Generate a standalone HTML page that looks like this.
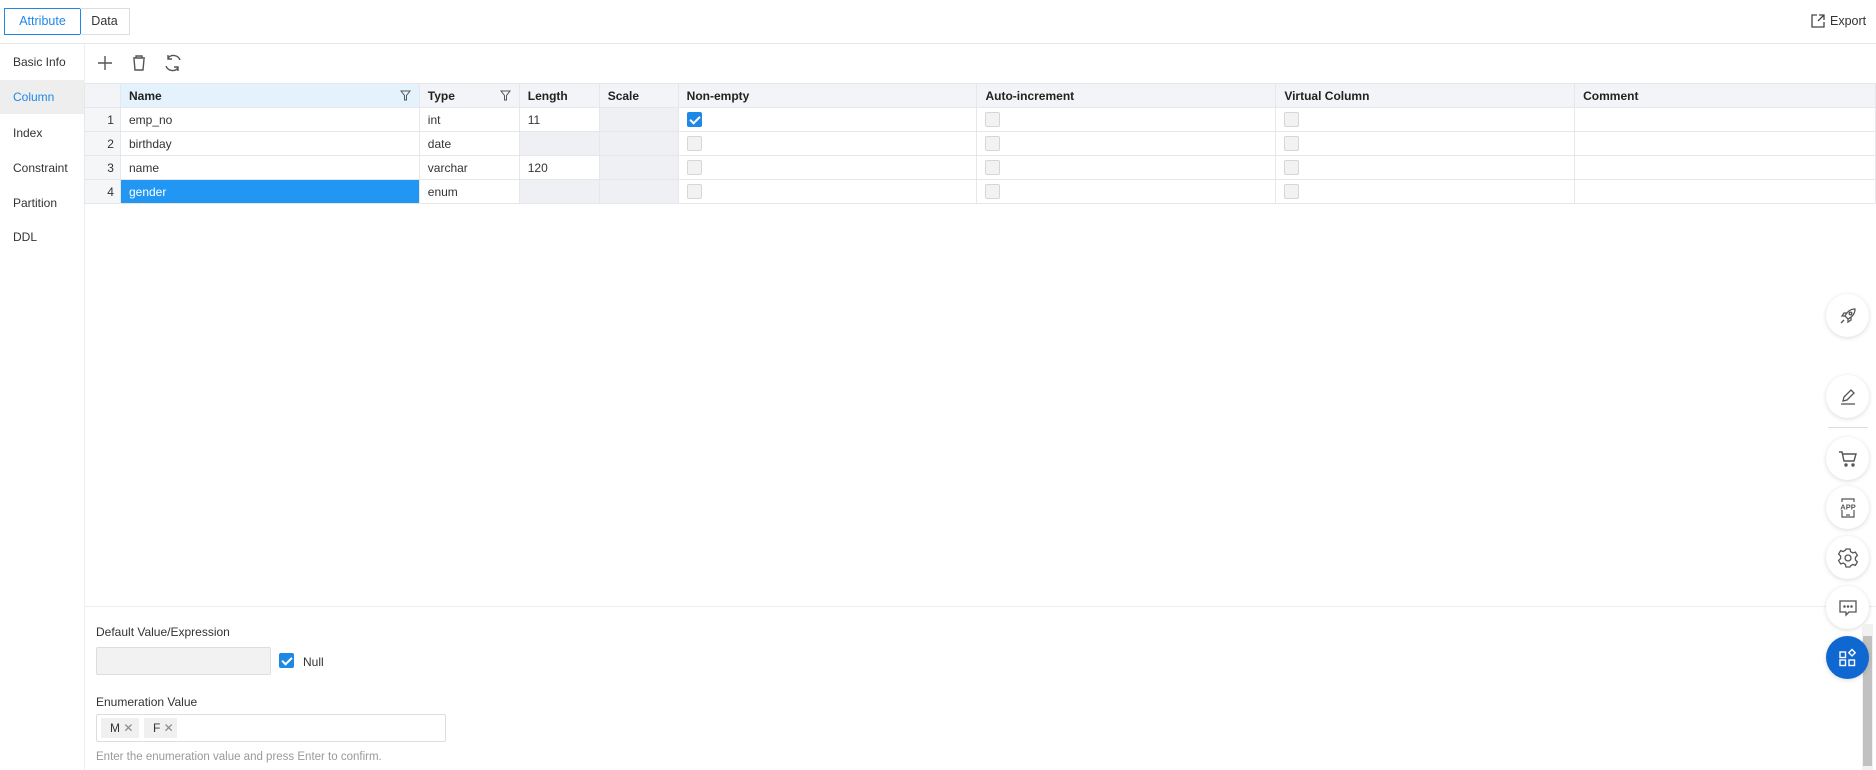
<!DOCTYPE html>
<html><head><meta charset="utf-8"><style>
*{box-sizing:border-box;margin:0;padding:0}
body{width:1876px;height:770px;overflow:hidden;background:#fff;font-family:"Liberation Sans",sans-serif;font-size:12px;color:#333;position:relative}
.abs{position:absolute}
.tab{position:absolute;top:8px;height:27px;line-height:25px;border:1px solid #ddd;text-align:center;font-size:12.5px}
.side div{position:absolute;left:0;width:84px;padding-left:13px;font-size:12px;color:#333}
table{position:absolute;left:84px;top:83px;border-collapse:collapse;table-layout:fixed}
td,th{border:1px solid #e6e7ea;height:24px;padding:0 8px;text-align:left;font-size:12px;white-space:nowrap}
th{background:#f3f4f7;font-weight:bold;color:#222;position:relative}
td.n{background:#f5f6f8;text-align:right;padding-right:6px;color:#333}
td.d{background:#eff0f3}
.cb{display:inline-block;width:15px;height:15px;border:1px solid #d6d6d6;border-radius:2px;background:#f2f2f2;vertical-align:middle}
.cbon{display:inline-block;width:15px;height:15px;border-radius:2px;background:#1e88e5;vertical-align:middle;position:relative}
.cbon:after{content:"";position:absolute;left:5px;top:2px;width:4px;height:8px;border:solid #fff;border-width:0 2px 2px 0;transform:rotate(45deg)}
.fil{position:absolute;right:8px;top:6px}
.fab{position:absolute;left:1826px;width:43px;height:43px;border-radius:50%;background:#fff;box-shadow:0 1px 5px rgba(0,0,0,.15);display:flex;align-items:center;justify-content:center}
</style></head><body>
<div class="tab" style="left:4px;width:77px;border-color:#1e88e5;color:#1e88e5">Attribute</div>
<div class="tab" style="left:80px;width:50px;border-left:none">Data</div>
<div class="abs" style="left:1810px;top:13px;font-size:12.5px;display:flex;align-items:center;gap:4px">
<svg width="16" height="16" viewBox="0 0 16 16" fill="none" stroke="#444" stroke-width="1.3"><path d="M7 2H2v12h12V9"/><path d="M9 2h5v5M14 2L8 8"/></svg>Export</div>
<div class="abs" style="left:0;top:43px;width:1876px;height:1px;background:#e8e8e8"></div>
<div class="abs" style="left:84px;top:44px;width:1px;height:726px;background:#eee"></div>
<div class="side">
<div style="top:55px">Basic Info</div>
<div style="top:80px;height:34px;line-height:34px;background:#eeeeee;color:#1e88e5">Column</div>
<div style="top:126px">Index</div>
<div style="top:161px">Constraint</div>
<div style="top:196px">Partition</div>
<div style="top:230px">DDL</div>
</div>
<svg class="abs" style="left:96px;top:54px" width="90" height="18" viewBox="0 0 90 18" fill="none" stroke="#555" stroke-width="1.4">
<path d="M9 2v14M2 9h14"/>
<path d="M37 4h12M40 4V2h6v2M38 5l1 11h8l1-11"/>
<path d="M84 6a7 7 0 0 0-12-2M70 12a7 7 0 0 0 12 2M72 1v4h4M82 17v-4h-4"/>
</svg>
<table>
<colgroup><col style="width:36px"><col style="width:299px"><col style="width:100px"><col style="width:80px"><col style="width:79px"><col style="width:299px"><col style="width:299px"><col style="width:299px"><col style="width:301px"></colgroup>
<tr style="height:22px"><th style="background:#f3f4f7"></th><th style="background:#e3f2fc">Name<svg class="fil" width="11" height="11" viewBox="0 0 11 11" fill="none" stroke="#555"><path d="M1 1h9L6.5 5.5V10h-2V5.5z"/></svg></th><th>Type<svg class="fil" width="11" height="11" viewBox="0 0 11 11" fill="none" stroke="#555"><path d="M1 1h9L6.5 5.5V10h-2V5.5z"/></svg></th><th>Length</th><th>Scale</th><th>Non-empty</th><th>Auto-increment</th><th>Virtual Column</th><th>Comment</th></tr>
<tr><td class="n">1</td><td>emp_no</td><td>int</td><td>11</td><td class="d"></td><td><span class="cbon"></span></td><td><span class="cb"></span></td><td><span class="cb"></span></td><td></td></tr>
<tr><td class="n">2</td><td>birthday</td><td>date</td><td class="d"></td><td class="d"></td><td><span class="cb"></span></td><td><span class="cb"></span></td><td><span class="cb"></span></td><td></td></tr>
<tr><td class="n">3</td><td>name</td><td>varchar</td><td>120</td><td class="d"></td><td><span class="cb"></span></td><td><span class="cb"></span></td><td><span class="cb"></span></td><td></td></tr>
<tr><td class="n">4</td><td style="background:#2196f3;color:#fff">gender</td><td>enum</td><td class="d"></td><td class="d"></td><td><span class="cb"></span></td><td><span class="cb"></span></td><td><span class="cb"></span></td><td></td></tr>
</table>
<div class="abs" style="left:85px;top:606px;width:1791px;height:1px;background:#eee"></div>
<div class="abs" style="left:96px;top:625px;font-size:12px">Default Value/Expression</div>
<div class="abs" style="left:96px;top:647px;width:175px;height:28px;background:#f2f2f2;border:1px solid #ddd;border-radius:2px"></div>
<div class="abs" style="left:279px;top:653px"><span class="cbon"></span></div>
<div class="abs" style="left:303px;top:655px;font-size:12px">Null</div>
<div class="abs" style="left:96px;top:695px;font-size:12px">Enumeration Value</div>
<div class="abs" style="left:96px;top:714px;width:350px;height:28px;border:1px solid #ddd;border-radius:2px"></div>
<div class="abs" style="left:101px;top:718px;width:38px;height:20px;background:#f0f0f0;line-height:20px;padding-left:9px;font-size:12px">M <span style="color:#888">✕</span></div>
<div class="abs" style="left:144px;top:718px;width:33px;height:20px;background:#f0f0f0;line-height:20px;padding-left:9px;font-size:12px">F <span style="color:#888">✕</span></div>
<div class="abs" style="left:96px;top:751px;font-size:11.5px;color:#999">Enter the enumeration value and press Enter to confirm.</div>

<div class="fab" style="top:294px"><svg width="20" height="20" viewBox="0 0 20 20" fill="none" stroke="#555" stroke-width="1.3"><path d="M17 3c-5 0-8 3-10 7l3 3c4-2 7-5 7-10z"/><circle cx="12.5" cy="7.5" r="1.3"/><path d="M7 10H4l2-3h3M10 13v3l3-2v-3M6 14l-3 3"/></svg></div>
<div class="fab" style="top:375px"><svg width="20" height="20" viewBox="0 0 20 20" fill="none" stroke="#555" stroke-width="1.3"><path d="M5 14l1-4 7-7 3 3-7 7z"/><path d="M3 17h14"/></svg></div>
<div class="abs" style="left:1828px;top:427px;width:40px;height:1px;background:#ddd"></div>
<div class="fab" style="top:437px"><svg width="20" height="20" viewBox="0 0 20 20" fill="none" stroke="#555" stroke-width="1.4"><path d="M1 3h3l2 9h10l2-7H5"/><circle cx="8" cy="16" r="1" fill="#555"/><circle cx="15" cy="16" r="1" fill="#555"/></svg></div>
<div class="fab" style="top:486px"><svg width="22" height="22" viewBox="0 0 22 22" fill="none" stroke="#555" stroke-width="1.2"><path d="M5 5V2h12v3M5 13v7h12v-7"/><text x="11" y="12.5" font-size="7.5" text-anchor="middle" fill="#555" stroke="none" font-family="Liberation Sans" font-weight="bold">APP</text><path d="M9 18h4"/></svg></div>
<div class="fab" style="top:536px"><svg width="22" height="22" viewBox="0 0 22 22" fill="none" stroke="#555" stroke-width="1.3"><path d="M9 2h4l.6 2.6 2.2 1.3 2.6-.8 2 3.4-2 1.9v2.6l2 1.9-2 3.4-2.6-.8-2.2 1.3L13 20H9l-.6-2.6-2.2-1.3-2.6.8-2-3.4 2-1.9V9l-2-1.9 2-3.4 2.6.8 2.2-1.3z"/><circle cx="11" cy="11" r="3"/></svg></div>
<div class="fab" style="top:586px"><svg width="22" height="22" viewBox="0 0 22 22" fill="none" stroke="#555" stroke-width="1.3"><path d="M3 4h16v11h-7l-3 3v-3H3z"/><circle cx="7.5" cy="9.5" r=".6" fill="#555"/><circle cx="11" cy="9.5" r=".6" fill="#555"/><circle cx="14.5" cy="9.5" r=".6" fill="#555"/></svg></div>
<div class="abs" style="left:1862px;top:624px;width:11px;height:146px;background:#f1f1f1"></div>
<div class="abs" style="left:1863px;top:636px;width:9px;height:130px;background:#c1c1c1"></div>
<div class="fab" style="top:636px;background:#0f68d1"><svg width="20" height="20" viewBox="0 0 20 20" fill="none" stroke="#fff" stroke-width="1.4"><rect x="2" y="4" width="5.5" height="5.5"/><rect x="2" y="12" width="5.5" height="5.5"/><rect x="11" y="12" width="5.5" height="5.5"/><path d="M14 1.5l3.2 3.2-3.2 3.2-3.2-3.2z"/></svg></div>
</body></html>
